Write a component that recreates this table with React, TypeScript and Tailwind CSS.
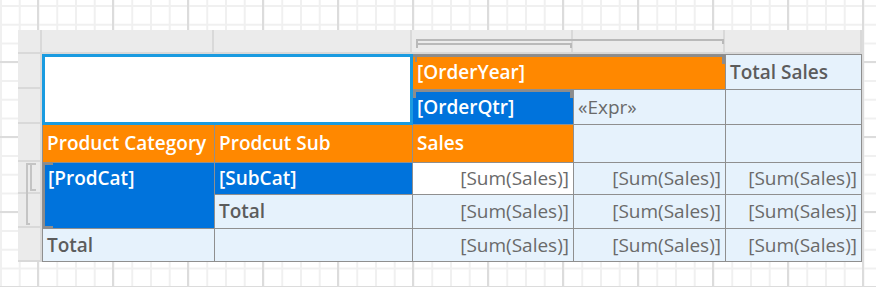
import React from 'react';

const orange = 'bg-[#ff8800] text-white font-semibold';
const blue = 'bg-[#0073dc] text-white font-semibold';
const light = 'bg-[#e6f2fc] text-[#5c5c5c]';
const grip = 'absolute bg-[#8c8c8c]';

function Cell({ className = '', children }: { className?: string; children?: React.ReactNode }) {
  return (
    <div className={`relative flex items-center px-[4px] whitespace-nowrap overflow-hidden ${className}`}>
      {children}
    </div>
  );
}

function Sum({ className = light }: { className?: string }) {
  return <Cell className={`justify-end ${className} text-[#6a6a6a]`}>[Sum(Sales)]</Cell>;
}

const colHeads = ['w-[172px]', 'w-[198px]', 'w-[161px]', 'w-[152px]', 'w-[137px]'];
const rowHeads = ['h-[35px]', 'h-[35px]', 'h-[38px]', 'h-[32px]', 'h-[34px]', 'h-[34px]'];

export default function App() {
  return (
    <div className="w-[876px] h-[287px] overflow-hidden bg-white bg-[linear-gradient(to_right,#dcdcdc_2px,transparent_2px),linear-gradient(to_bottom,#dcdcdc_2px,transparent_2px),linear-gradient(to_right,#f0f0f0_2px,transparent_2px),linear-gradient(to_bottom,#f0f0f0_2px,transparent_2px)] bg-[size:75px_75px,75px_75px,18.75px_18.75px,18.75px_18.75px] bg-[position:37px_0,0_61px,0_5px,0_5px] pt-[30px] pl-[18px] font-['Open_Sans','Noto_Sans',sans-serif] text-[19px] leading-none">
      <div className="w-[844px] flex flex-col">
        {/* column header strip */}
        <div className="relative flex h-[24px]">
          <div className="w-[24px] h-full bg-[#ebebeb] border-r-2 border-b-2 border-[#d9d9d9]" />
          {colHeads.map((w) => (
            <div key={w} className={`${w} h-full bg-[#ebebeb] border-r-2 border-b-2 border-[#d9d9d9]`} />
          ))}
          <svg className="absolute left-0 top-0 pointer-events-none" width="844" height="24" fill="none" stroke="#b9b9b9" strokeWidth="2">
            <path d="M399 14V10H705V14" />
            <path d="M399 18V14H553V18" />
          </svg>
        </div>

        <div className="flex">
          {/* row header strip */}
          <div className="relative w-[24px] flex flex-col">
            {rowHeads.map((h, i) => (
              <div key={i} className={`${h} bg-[#ebebeb] border-r-2 border-b-2 border-[#d9d9d9]`} />
            ))}
            <svg className="absolute left-0 top-0 pointer-events-none" width="24" height="208" fill="none" stroke="#c4c4c4" strokeWidth="2">
              <path d="M12 110H9V170H12" />
              <path d="M18 110H13V136H18" />
            </svg>
          </div>

          {/* table */}
          <div className="grid grid-cols-[171px_197px_160px_151px_135px] grid-rows-[34px_34px_37px_31px_33px_32px] gap-px p-px bg-[#8f8f8f]">
            <div className="relative z-10 col-span-2 row-span-2 bg-white outline-[3px] outline-solid -outline-offset-2 outline-[#1a9be0]" />
            <Cell className={`col-span-2 ${orange}`}>
              [OrderYear]
              <span className={`${grip} left-0 right-0 top-0 h-[2px]`} />
              <span className={`${grip} left-[2px] top-0 w-[2px] h-[7px]`} />
              <span className={`${grip} right-0 top-0 w-[3px] h-[9px]`} />
            </Cell>
            <Cell className={`${light} font-semibold`}>Total Sales</Cell>

            <Cell className={blue}>
              [OrderQtr]
              <span className={`${grip} left-0 right-0 top-0 h-[2px]`} />
              <span className={`${grip} left-0 top-0 w-[3px] h-[8px]`} />
              <span className={`${grip} right-0 top-0 w-[3px] h-[8px]`} />
            </Cell>
            <Cell className={`${light} text-[#6a6a6a]`}>«Expr»</Cell>
            <Cell className={light} />

            <Cell className={orange}>Product Category</Cell>
            <Cell className={orange}>Prodcut Sub</Cell>
            <Cell className={orange}>Sales</Cell>
            <Cell className={light} />
            <Cell className={light} />

            <Cell className={`row-span-2 items-start ${blue}`}>
              <span className="h-[31px] flex items-center pl-[1px]">[ProdCat]</span>
              <span className={`${grip} left-0 top-0 bottom-0 w-[2px]`} />
              <span className={`${grip} left-0 top-0 w-[10px] h-[2px]`} />
              <span className={`${grip} left-0 bottom-0 w-[10px] h-[2px]`} />
            </Cell>
            <Cell className={blue}>[SubCat]</Cell>
            <Sum className="bg-white" />
            <Sum />
            <Sum />

            <Cell className={`${light} font-semibold`}>Total</Cell>
            <Sum />
            <Sum />
            <Sum />

            <Cell className={`${light} font-semibold`}>Total</Cell>
            <Cell className={light} />
            <Sum />
            <Sum />
            <Sum />
          </div>
        </div>
      </div>
    </div>
  );
}
